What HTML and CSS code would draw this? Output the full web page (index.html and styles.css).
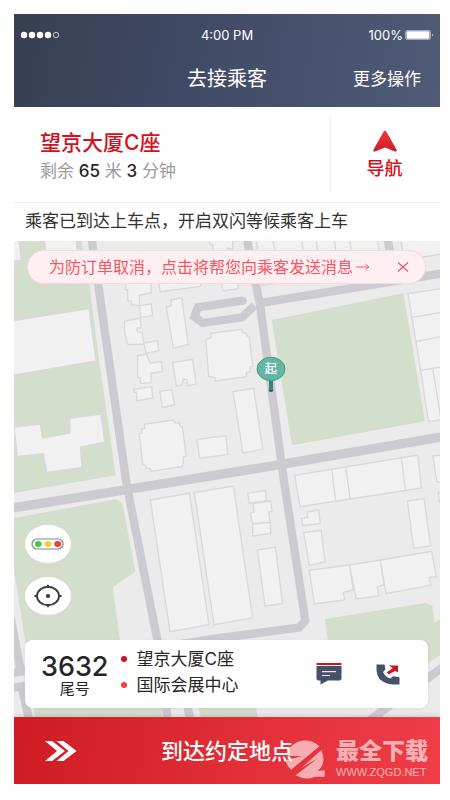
FILE: index.html
```html
<!DOCTYPE html>
<html lang="zh-CN">
<head>
    <meta charset="UTF-8">
    <meta name="viewport" content="width=device-width, initial-scale=1.0">
    <title>去接乘客</title>
    <link rel="stylesheet" href="styles.css">
</head>
<body>
    <div class="phone">
        <header class="header">
            <div class="status">
                <svg class="signal" width="40" height="8" viewBox="0 0 40 8">
                    <g fill="#fff">
                        <circle cx="4" cy="4" r="3.2"/>
                        <circle cx="12" cy="4" r="3.2"/>
                        <circle cx="20" cy="4" r="3.2"/>
                        <circle cx="28" cy="4" r="3.2"/>
                    </g>
                    <circle cx="36" cy="4" r="2.7" fill="none" stroke="#fff" stroke-width=".7"/>
                </svg>
                <span class="time">4:00 PM</span>
                <span class="battery">
                    100%
                    <svg width="29" height="10" viewBox="0 0 29 10">
                        <rect x=".5" y=".5" width="25" height="9" rx="1.5" fill="none" stroke="#c5cbd8" stroke-width=".7"/>
                        <rect x="1.5" y="1.3" width="23" height="7.4" rx="1" fill="#fff"/>
                        <path d="M27 3.5q1.5 1.5 0 3z" fill="#fff"/>
                    </svg>
                </span>
            </div>
            <div class="titlebar">
                <h1>去接乘客</h1>
                <button type="button" class="more">更多操作</button>
            </div>
        </header>

        <section class="trip">
            <div class="destination">
                <h2>望京大厦C座</h2>
                <p>剩余 <b>65</b> 米 <b>3</b> 分钟</p>
            </div>
            <button type="button" class="navigate">
                <svg width="24" height="22" viewBox="0 0 24 22">
                    <defs>
                        <linearGradient id="arrowFill" x1="0" y1="0" x2="0" y2="1">
                            <stop offset="0" stop-color="#ee3b45"/>
                            <stop offset="1" stop-color="#cf1b24"/>
                        </linearGradient>
                    </defs>
                    <path d="M10.8 1.2Q12 .1 13.2 1.2L23.7 20Q24 22 22 21.4L12 17.4 2 21.4Q0 22 .3 20z" fill="url(#arrowFill)"/>
                </svg>
                导航
            </button>
        </section>

        <p class="notice">乘客已到达上车点，开启双闪等候乘客上车</p>

        <main class="map">
            <svg class="map-canvas" viewBox="0 0 1278 1428" preserveAspectRatio="xMidYMid slice">
                <!-- parks -->
                <g fill="#d3decd">
                    <path d="M0 0H203L228 141 250 321 305 703 0 756z"/>
                    <path d="M773 237 1168 157 1233 541 834 613z"/>
                    <path d="M0 831 308 774 326 790 364 992 296 1039 318 1197 330 1330H60L33 1197 0 987z"/>
                    <path d="M933 1134 1233 1086 1255 1094 1261 1145 1278 1135V1242L1150 1330H960z"/>
                    <path d="M58 1380H445V1428H62zM550 1380H725L730 1428H560z"/>
                </g>
                <!-- roads -->
                <g fill="none" stroke="#cccbd1" stroke-width="25">
                    <path d="M234-10V0L338 731 430 1197 462 1440"/>
                    <path d="M-10 802 338 746 797 671 1290 587" stroke-width="28"/>
                    <path d="M1290 96 728 188"/>
                    <path d="M698-10 738 191 810 721 874 1139 855 1160 618 1191 480 1212"/>
                    <path d="M1120-10 1142 110"/>
                    <path d="M686 179 552 199 541 227 566 246 684 229 722 194"/>
                    <circle cx="686" cy="179" r="6" stroke-width="12"/>
                    <path d="M-10 1130 22 1300"/>
                    <path d="M-10 1297 80 1282"/>
                    <path d="M-10 1341 80 1328"/>
                    <path d="M22 1335 46 1440M506 1330 530 1440"/>
                    <path d="M1050 1450 1290 1276"/>
                </g>
                <!-- buildings, upper blocks -->
                <g transform="translate(0 -9)" fill="#f1f1f1" stroke="#d9d9dc" stroke-width="4">
                    <path d="M-4 0H14L22 66-4 70z"/>
                    <path d="M91 0H186L192 60 97 70z"/>
                    <path d="M-4 248 225 212 246 369-4 412z"/>
                    <path d="M0 567 79 558 86 600 168 585 167 541 261 528 272 612 199 628 204 688 98 703 88 647 10 655z"/>
                    <path d="M588 5H656V35L640 30V60H620V40H596V20H588z"/>
                    <path d="M335 130H410L411 165 376 172 377 203 354 200 352 190 341 188V155H335z"/>
                    <path d="M377 203 412 198 416 233 380 238z"/>
                    <path d="M331 250 378 240 382 268 368 270 370 282 385 284 389 318 342 320 332 285z"/>
                    <path d="M389 315 430 308 434 338 396 346z"/>
                    <path d="M371 353 398 349 408 375 443 371 446 400 411 405V434L380 436 378 419 371 418z"/>
                    <path d="M359 454 413 446 416 480 369 488 367 462 360 463z"/>
                    <path d="M437 460 473 455 482 500 446 509z"/>
                    <path d="M476 374 535 364 547 438 521 443 518 424 508 423 505 441 487 443z"/>
                    <path d="M457 207 472 203 471 186 503 179 523 319 478 331z"/>
                    <path d="M433 120H560V145L438 161z"/>
                    <path d="M620 120H670L673 152 627 159z"/>
                    <path d="M575 306 591 299 590 286 683 274 685 284 697 285 698 294 706 295 716 385 708 387 709 400 697 405V416L605 429 602 419 584 415z"/>
                    <path d="M657 461 719 451 746 634 687 646z"/>
                    <path d="M549 604 636 593 641 649 557 661z"/>
                    <path d="M376 588 384 585 383 573 392 571 391 558 478 546 484 556 496 554 498 565 505 567 517 655 508 657V668L505 685 412 700 408 692 397 690 395 682 386 680z"/>
                    <path d="M726 0H1090L1100 80 745 143zM776 0 790 80M862 0 872 80M905 0 918 80M960 0 972 80M1006 0 1018 80"/>
                    <path d="M1160 0H1282V48L1170 66z"/>
                    <path d="M1182 167 1282 152V545L1243 550 1220 397zM1196 238 1282 223M1206 310 1282 296M1220 397 1282 387M1256 392 1282 550"/>
                    <path d="M842 712 1211 651 1222 750 858 806zM953 694 965 788M996 688 1008 782M1162 660 1175 757"/>
                    <path d="M1257 654 1282 651V733L1268 731z"/>
                </g>
                <!-- buildings, lower blocks -->
                <g transform="translate(0 747)" fill="#f1f1f1" stroke="#d9d9dc" stroke-width="4">
                    <path d="M409 30 526 10 585 404 468 425z"/>
                    <path d="M541 8 658-12 716 384 600 404z"/>
                    <path d="M701 10 755 2 757 32 706 40z"/>
                    <path d="M718 40 770 33 774 64 764 67 768 98 716 101 709 70 720 67z"/>
                    <path d="M716 102 768 97 771 130 716 138z"/>
                    <path d="M730 180 784 172 806 340 753 348z"/>
                    <path d="M863 86 881 82 880 66 914 60 919 100 866 107z"/>
                    <path d="M869 128 921 121 933 215 886 226z"/>
                    <path d="M886 241 1006 225 1018 300 988 307 992 330 901 342z"/>
                    <path d="M1006 225 1099 210 1110 285 1090 290 1095 318 1027 327z"/>
                    <path d="M1099 210 1253 184 1267 260 1246 262 1250 286 1116 311z"/>
                    <path d="M1180 33 1230 26 1250 168 1199 175z"/>
                    <path d="M1273 8 1282 6V38L1276 37z"/>
                </g>
                <!-- pick-up pin -->
                <path d="M771 410V446" stroke="#3b8272" stroke-width="12"/>
                <path d="M763 446H779L775 452H767z" fill="#45414a"/>
                <ellipse cx="771" cy="384" rx="42" ry="35" fill="#62b7a2" stroke="#4b9a87" stroke-width="3"/>
                <text class="pin-text" x="771" y="397">起</text>
            </svg>

            <div class="tip">
                <button type="button" class="tip-send">
                    为防订单取消，点击将帮您向乘客发送消息
                    <svg width="14" height="10" viewBox="0 0 14 10" fill="none" stroke="#f75562">
                        <path d="M0 5H13M9.5 2 13 5 9.5 8"/>
                    </svg>
                </button>
                <button type="button" class="tip-close" aria-label="关闭">
                    <svg width="12" height="10" viewBox="0 0 12 10" fill="none" stroke="#e8505e" stroke-width="1.1">
                        <path d="M1 .5 11 9.5M11 .5 1 9.5"/>
                    </svg>
                </button>
            </div>

            <div class="tools">
                <button type="button" class="tool" aria-label="路况">
                    <svg width="34" height="12" viewBox="0 0 34 12">
                        <rect x="1" y="1" width="31" height="10" rx="5" fill="#fff" stroke="#7c8494" stroke-width="1.2"/>
                        <ellipse cx="7.3" cy="6" rx="3.4" ry="3" fill="#41d02f"/>
                        <ellipse cx="17" cy="6" rx="3.4" ry="3" fill="#ecd32e"/>
                        <ellipse cx="26.7" cy="6" rx="3.4" ry="3" fill="#f93a3a"/>
                    </svg>
                </button>
                <button type="button" class="tool" aria-label="定位">
                    <svg width="28" height="24" viewBox="0 0 28 24" fill="none" stroke="#3c3c44" stroke-width="1.9">
                        <ellipse cx="14" cy="12" rx="11" ry="9.3"/>
                        <path d="M14 .7V4M14 20V23.3M.5 12H4M24 12H27.5"/>
                        <ellipse cx="14" cy="12" rx="2.2" ry="2" fill="#3c3c44" stroke="none"/>
                    </svg>
                </button>
            </div>

            <section class="order">
                <div class="tail">
                    <strong>3632</strong>
                    <span>尾号</span>
                </div>
                <ul class="route">
                    <li class="from">望京大厦C座</li>
                    <li class="to">国际会展中心</li>
                </ul>
                <button type="button" class="contact" aria-label="发消息">
                    <svg width="26" height="22" viewBox="0 0 26 22">
                        <path d="M.5 0H25.5V2H.5z" fill="#d3101c"/>
                        <path d="M.5 3H25.5V16L24 17.5H12L4.5 21.5V17.5H2L.5 16z" fill="#465068"/>
                        <path d="M6 8.7H20M6 12.5H14" stroke="#e4e7ec" stroke-width="1.2"/>
                    </svg>
                </button>
                <button type="button" class="contact" aria-label="打电话">
                    <svg width="24" height="21" viewBox="0 0 24 21">
                        <path d="M.5.5H8.5L9.500 5.500 7 8Q9 13 14.500 14.500L17 12.300 23.500 13.300V20.500H17Q.5 19 .5 5z" fill="#465068"/>
                        <path d="M13 1.5H22V8.500L19.300 6.700 12.500 10.500 10.800 8.300 16.800 4.300z" fill="#d3101c"/>
                    </svg>
                </button>
            </section>
        </main>

        <div class="footer">
            <button type="button" class="arrive">
                <svg class="chevrons" width="32" height="20" viewBox="0 0 32 20" fill="#fff">
                    <path d="M0 0H7L20 10 7 20H0L12 10z"/>
                    <path d="M11.5 0H18.5L31.5 10 18.5 20H11.5L23.500 10z"/>
                </svg>
                <span>到达约定地点</span>
            </button>
            <div class="watermark">
                <svg width="40" height="42" viewBox="0 0 120 126" fill="#fff">
                    <path d="M10 38A60 60 0 0 1 103 28Q85 44 18 98Q5 86 1 69L52 58 10 57z"/>
                    <path d="M109 39Q126 78 98 102L119 100V119H90Q62 132 32 115L98 64 48 94z"/>
                </svg>
                <div class="watermark-text">
                    <b>最全下载</b>
                    <small>WWW.ZQGD.NET</small>
                </div>
            </div>
        </div>
    </div>
</body>
</html>
```
FILE: styles.css
```css
* {
    box-sizing: border-box;
}
body {
    margin: 0;
    background: #fff;
    color: #262626;
    font-family: Inter, "Noto Sans CJK SC", sans-serif;
}
h1, h2, p, ul {
    margin: 0;
    padding: 0;
    font-weight: 400;
}
button {
    padding: 0;
    border: none;
    background: none;
    color: inherit;
    font-family: inherit;
    cursor: pointer;
}
svg {
    display: block;
}
.phone {
    display: flex;
    flex-direction: column;
    min-height: 100vh;
    padding: 14px 10px 16px 14px;
}

/* header */
.header {
    padding-bottom: 5px;
    background: linear-gradient(100deg, #373f51, #404964 40%, #4f5b77);
    color: #fff;
}
.status {
    display: grid;
    grid-template-columns: 1fr auto 1fr;
    align-items: center;
    height: 42px;
    padding: 0 6px;
    font-size: 13px;
}
.battery {
    display: flex;
    justify-content: flex-end;
    align-items: center;
    gap: 2px;
}
.titlebar {
    display: grid;
    grid-template-columns: 1fr auto 1fr;
    align-items: center;
    height: 46px;
    padding: 0 19px;
}
.titlebar h1 {
    grid-column: 2;
    font-size: 20px;
    line-height: 28px;
}
.more {
    justify-self: end;
    font-size: 17px;
    line-height: 24px;
}

/* destination */
.trip {
    display: flex;
    align-items: center;
    height: 96px;
    border-bottom: 1px solid #eee;
}
.destination {
    flex: 1;
    padding-left: 26px;
}
.destination h2 {
    color: #d3101c;
    font-size: 21px;
    font-weight: 500;
    line-height: 32px;
}
.destination p {
    color: #9b9b9b;
    font-size: 17px;
    line-height: 24px;
}
.destination b {
    color: #262626;
    font-weight: 500;
}
.navigate {
    display: flex;
    flex-direction: column;
    align-items: center;
    justify-content: center;
    gap: 5px;
    width: 110px;
    height: 76px;
    padding: 2px 2px 0 0;
    border-left: 1px solid #eee;
    color: #d3101c;
    font-size: 18px;
    font-weight: 500;
    line-height: 24px;
}
.notice {
    padding: 5px 11px 7px;
    color: #333;
    font-size: 17px;
    line-height: 26px;
}

/* map */
.map {
    position: relative;
    display: flex;
    flex: 1;
    flex-direction: column;
    padding: 9px 12px 9px 11px;
    background: #ebebeb;
}
.map-canvas {
    position: absolute;
    top: 0;
    left: 0;
    width: 100%;
    height: 100%;
}
.pin-text {
    fill: #fff;
    font-size: 37px;
    font-weight: 500;
    text-anchor: middle;
}
.tip, .tools, .order {
    position: relative;
}
.tip {
    display: flex;
    justify-content: space-between;
    align-items: center;
    height: 34px;
    margin: 0 2px;
    padding: 0 16px 0 21px;
    border: 1px solid #fbd6db;
    border-radius: 17px;
    background: #fef0f2;
    color: #f75562;
}
.tip-send {
    display: flex;
    align-items: center;
    gap: 3px;
    font-size: 16px;
    line-height: 24px;
    white-space: nowrap;
}
.tools {
    display: flex;
    flex-direction: column;
    gap: 14px;
    margin: auto 0 25px;
}
.tool {
    display: flex;
    align-items: center;
    justify-content: center;
    width: 46px;
    height: 38px;
    border-radius: 50%;
    background: #fff;
}

/* order card */
.order {
    display: flex;
    align-items: center;
    height: 68px;
    padding: 0 28px 0 16px;
    border-radius: 8px;
    background: #fff;
    box-shadow: 0 1px 5px rgba(0, 0, 0, 0.06);
}
.tail {
    display: flex;
    flex-direction: column;
    align-items: center;
    padding-top: 4px;
}
.tail strong {
    font-size: 27px;
    font-weight: 500;
    line-height: 26px;
}
.tail span {
    font-size: 15px;
    line-height: 18px;
}
.route {
    flex: 1;
    padding: 0 0 4px 12px;
    list-style: none;
}
.route li {
    display: flex;
    align-items: center;
    gap: 10px;
    font-size: 17px;
    line-height: 26px;
}
.route li::before {
    content: "";
    width: 6px;
    height: 6px;
    border-radius: 50%;
    background: #d3101c;
}
.route .to::before {
    background: #f93a3a;
}
.contact + .contact {
    margin-left: 34px;
}

/* footer */
.footer {
    position: relative;
    box-shadow: 0 -1px 5px rgba(0, 0, 0, 0.15);
    clip-path: inset(-8px 0 0 0);
}
.arrive {
    display: grid;
    grid-template-columns: 1fr auto 1fr;
    align-items: center;
    width: 100%;
    height: 67px;
    padding: 0 31px;
    background: linear-gradient(100deg, #cf1b22, #e02d36 50%, #f03e49);
    color: #fff;
    font-size: 22px;
    font-weight: 500;
    line-height: 32px;
}
.watermark {
    position: absolute;
    top: 20px;
    right: 12px;
    display: flex;
    gap: 11px;
    color: #fff;
    opacity: 0.6;
    pointer-events: none;
}
.watermark-text {
    display: flex;
    flex-direction: column;
}
.watermark b {
    font-size: 23px;
    font-weight: 900;
    line-height: 28px;
}
.watermark small {
    font-family: "Liberation Sans", sans-serif;
    font-size: 11px;
    line-height: 14px;
}
```
